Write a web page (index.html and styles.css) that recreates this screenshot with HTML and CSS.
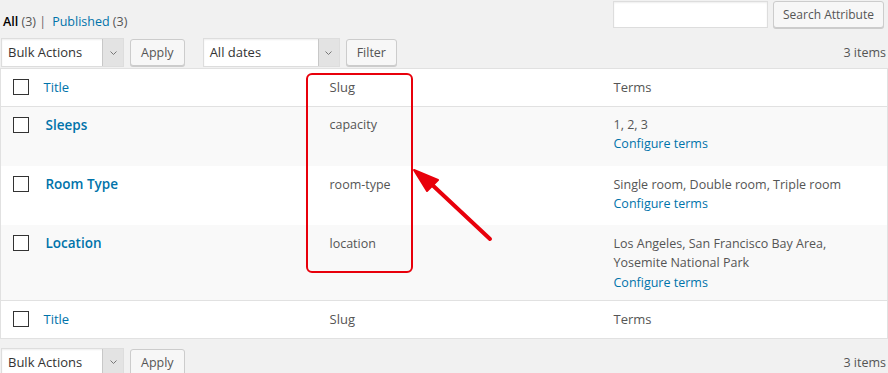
FILE: index.html
```html
<!DOCTYPE html>
<html>
<head>
<meta charset="utf-8">
<link rel="stylesheet" href="styles.css">
</head>
<body>
<div class="page">
  <div class="topbar">
    <ul class="subsubsub">
      <li><a class="current">All <span class="count">(3)</span></a> |</li>
      <li><a class="link">Published <span class="count">(3)</span></a></li>
    </ul>
    <div class="search-box">
      <input class="search-input" type="text">
      <button class="button">Search Attribute</button>
    </div>
  </div>

  <div class="tablenav top">
    <div class="actions">
      <div class="select wide"><span>Bulk Actions</span><span class="arrow"><svg width="9" height="6" viewBox="0 0 9 6"><path d="M1.5 1.5 L4.5 4.5 L7.5 1.5" fill="none" stroke="#777" stroke-width="1"/></svg></span></div>
      <button class="button">Apply</button>
    </div>
    <div class="actions">
      <div class="select dates"><span>All dates</span><span class="arrow"><svg width="9" height="6" viewBox="0 0 9 6"><path d="M1.5 1.5 L4.5 4.5 L7.5 1.5" fill="none" stroke="#777" stroke-width="1"/></svg></span></div>
      <button class="button">Filter</button>
    </div>
    <div class="items">3 items</div>
  </div>

  <table class="list">
    <thead>
      <tr>
        <td class="check"><span class="cb"></span></td>
        <th class="col-title"><a class="link">Title</a></th>
        <th class="col-slug">Slug</th>
        <th class="col-terms">Terms</th>
      </tr>
    </thead>
    <tbody>
      <tr class="alt">
        <td class="check"><span class="cb"></span></td>
        <td class="col-title"><strong class="rowtitle">Sleeps</strong><div class="row-actions"></div></td>
        <td class="col-slug">capacity</td>
        <td class="col-terms">1, 2, 3<br><a class="link">Configure terms</a></td>
      </tr>
      <tr>
        <td class="check"><span class="cb"></span></td>
        <td class="col-title"><strong class="rowtitle">Room Type</strong><div class="row-actions"></div></td>
        <td class="col-slug">room-type</td>
        <td class="col-terms">Single room, Double room, Triple room<br><a class="link">Configure terms</a></td>
      </tr>
      <tr class="alt">
        <td class="check"><span class="cb"></span></td>
        <td class="col-title"><strong class="rowtitle">Location</strong><div class="row-actions"></div></td>
        <td class="col-slug">location</td>
        <td class="col-terms">Los Angeles, San Francisco Bay Area,<br>Yosemite National Park<br><a class="link">Configure terms</a></td>
      </tr>
    </tbody>
    <tfoot>
      <tr>
        <td class="check"><span class="cb"></span></td>
        <th class="col-title"><a class="link">Title</a></th>
        <th class="col-slug">Slug</th>
        <th class="col-terms">Terms</th>
      </tr>
    </tfoot>
  </table>

  <div class="tablenav bottom">
    <div class="actions">
      <div class="select wide"><span>Bulk Actions</span><span class="arrow"><svg width="9" height="6" viewBox="0 0 9 6"><path d="M1.5 1.5 L4.5 4.5 L7.5 1.5" fill="none" stroke="#777" stroke-width="1"/></svg></span></div>
      <button class="button">Apply</button>
    </div>
    <div class="items">3 items</div>
  </div>

  <div class="highlight"></div>
  <svg class="pointer" width="100" height="90" viewBox="0 0 100 90">
    <line x1="90" y1="79" x2="27" y2="20" stroke="#e8000b" stroke-width="4" stroke-linecap="round"/>
    <polygon points="14,10 38,20 27,31" fill="#e8000b" stroke="#e8000b" stroke-width="2" stroke-linejoin="round"/>
  </svg>
</div>
</body>
</html>
```

FILE: styles.css
```css
* { box-sizing: border-box; }
html, body { margin: 0; padding: 0; }
body {
  background: #f1f1f1;
  font-family: "Open Sans", "Noto Sans", "Liberation Sans", sans-serif;
  font-size: 12px;
  color: #444;
  width: 888px;
  height: 373px;
  overflow: hidden;
}
.page { position: relative; }
.link { color: #0073aa; text-decoration: none; }

.topbar {
  display: flex;
  justify-content: space-between;
  align-items: flex-start;
  height: 37px;
}
.subsubsub {
  list-style: none;
  margin: 0;
  padding: 12px 0 0 3px;
  display: flex;
  gap: 6px;
  line-height: 19px;
  font-size: 12.5px;
  color: #666;
}
.subsubsub li { display: inline; }
.current { color: #000; font-weight: 600; }
.current .count, .link .count { color: #555; font-weight: 400; }
.search-box {
  display: flex;
  gap: 5px;
  padding: 1px 4px 0 0;
}
.search-input {
  width: 155px;
  height: 27px;
  border: 1px solid #ddd;
  background: #fff;
  box-shadow: inset 0 1px 2px rgba(0,0,0,.07);
  margin: 0;
}
.button {
  font-family: inherit;
  font-size: 12px;
  color: #555;
  background: #f7f7f7;
  border: 1px solid #ccc;
  border-radius: 3px;
  box-shadow: 0 1px 0 #ccc;
  height: 27px;
  padding: 0 10px;
  margin: 0;
  line-height: 25px;
}
.search-box .button { width: 111px; padding: 0; }

.tablenav {
  display: flex;
  align-items: center;
  height: 31px;
}
.actions {
  display: flex;
  align-items: center;
  gap: 6px;
  padding-left: 1px;
  margin-right: 17px;
}
.select {
  display: flex;
  align-items: stretch;
  justify-content: space-between;
  height: 29px;
  background: #fff;
  border: 1px solid #ddd;
  box-shadow: inset 0 1px 2px rgba(0,0,0,.07);
  color: #333;
  font-size: 13px;
  line-height: 27px;
  padding-left: 6px;
}
.select.wide { width: 123px; }
.select.dates { width: 137px; }
.select .arrow {
  width: 21px;
  background: #e3e3e3;
  border-left: 1px solid #c8c8c8;
  display: flex;
  align-items: center;
  justify-content: center;
}
.actions .button { font-size: 12.5px; }
.items {
  margin-left: auto;
  padding-right: 2px;
  color: #555;
  font-size: 12.5px;
}

.list {
  width: 888px;
  border-collapse: collapse;
  background: #fff;
  border: 1px solid #e1e1e1;
  table-layout: fixed;
  font-size: 12.5px;
}
.list td, .list th {
  text-align: left;
  vertical-align: top;
  padding: 8px 10px;
  line-height: 19.5px;
  font-weight: 400;
}
.list .check { width: 33px; padding: 10px 0 0 12px; }
.list .col-title { width: 286px; }
.list .col-slug { width: 284px; color: #555; }
.list .col-terms { color: #555; }
.list thead th { color: #32373c; font-size: 13px; padding-top: 9px; padding-bottom: 8px; }
.list tfoot th { color: #32373c; font-size: 13px; padding-top: 9px; padding-bottom: 8px; }
.list tfoot .check { padding-top: 10px; }
.list thead tr { border-bottom: 1px solid #e1e1e1; }
.list tfoot tr { border-top: 1px solid #e1e1e1; }
.list tbody tr.alt { background: #f9f9f9; }
.list tbody tr .col-terms, .list tbody tr .col-slug { padding-top: 9px; }
.list tbody tr:first-child .col-terms, .list tbody tr:first-child .col-slug { padding-top: 8px; }
.cb {
  display: block;
  width: 16px;
  height: 16px;
  border: 1px solid #333;
  background: #fff;
}
.rowtitle {
  color: #0073aa;
  font-weight: 600;
  font-size: 13.5px;
  padding-left: 2px;
  line-height: 20px;
  display: block;
}
.row-actions { height: 23px; }
.list tbody tr:last-child .row-actions { height: 24px; }

.tablenav.bottom { margin-top: 8px; height: 31px; }

.highlight {
  position: absolute;
  left: 306px;
  top: 73px;
  width: 107px;
  height: 200px;
  border: 2px solid #e8000b;
  border-radius: 6px;
}
.pointer {
  position: absolute;
  left: 400px;
  top: 160px;
}
```
